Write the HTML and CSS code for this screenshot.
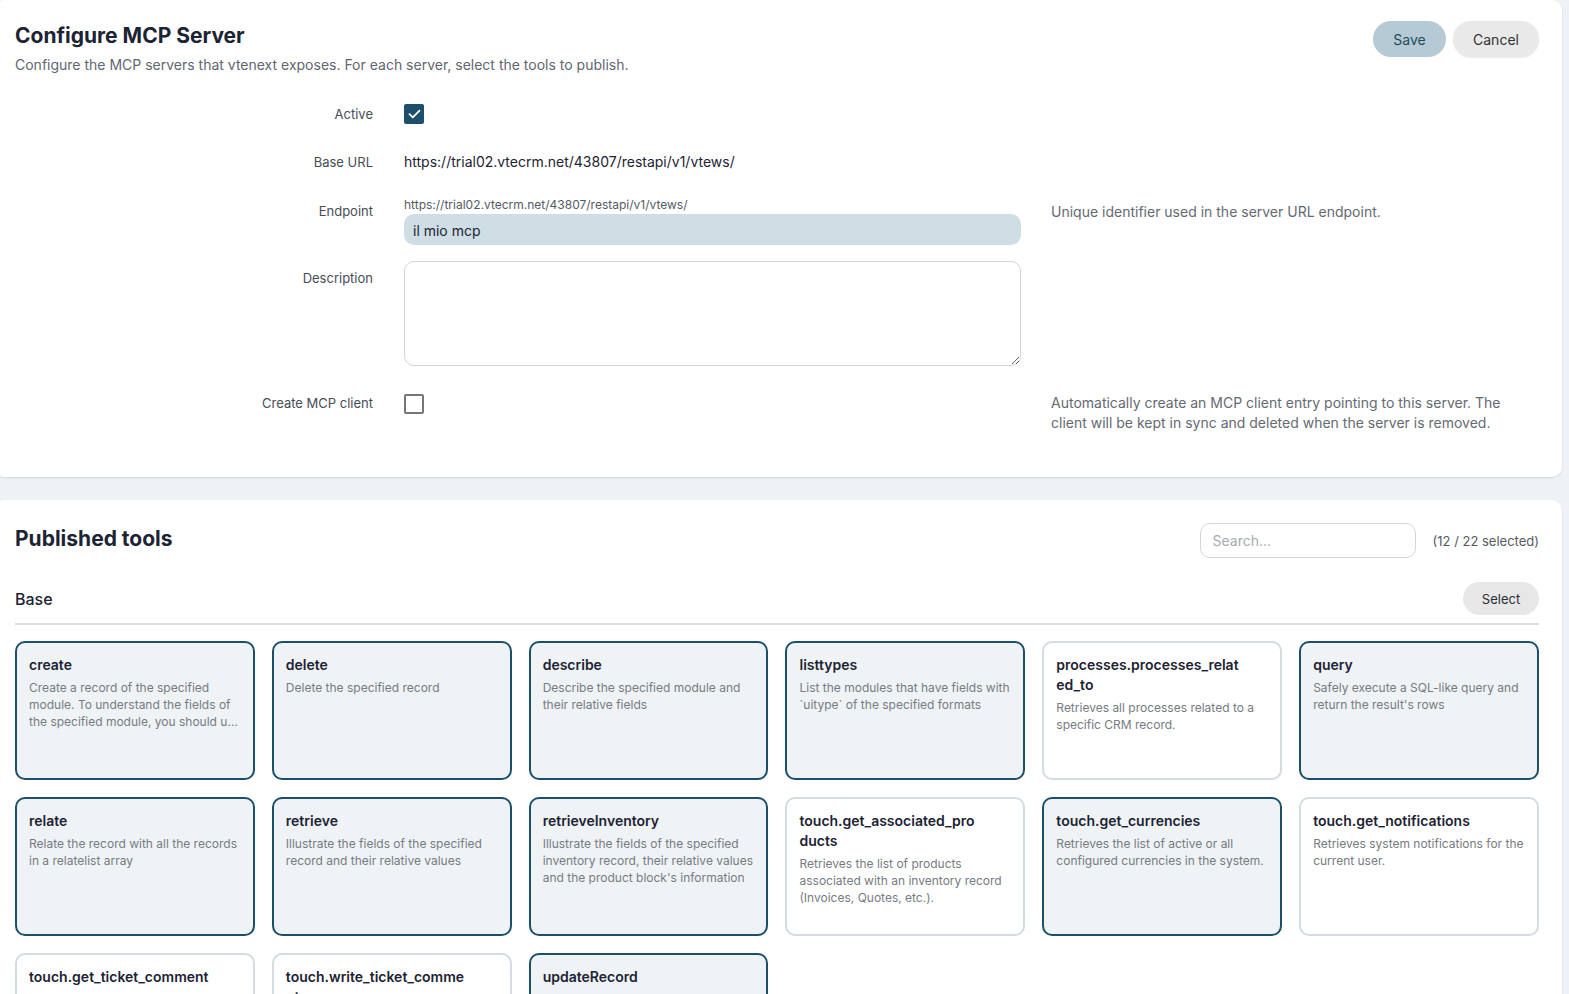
FILE: index.html
```html
<!DOCTYPE html>
<html lang="en">

<head>
    <meta charset="UTF-8">
    <meta name="viewport" content="width=device-width, initial-scale=1.0">
    <title>Configure MCP Server</title>
    <link rel="stylesheet" href="styles.css">
</head>

<body>
    <div class="page">
        <section class="panel settings">
            <div class="panel-head">
                <div>
                    <h1 class="title">Configure MCP Server</h1>
                    <p class="subtitle">Configure the MCP servers that vtenext exposes. For each server, select the tools to publish.</p>
                </div>
                <div class="actions">
                    <button class="btn btn-save">Save</button>
                    <button class="btn btn-cancel">Cancel</button>
                </div>
            </div>

            <div class="form">
                <div class="row row-active">
                    <label class="label">Active</label>
                    <div class="control">
                        <span class="check checked">
                            <svg width="13" height="10" viewBox="0 0 13 10"><path d="M1.5 5.2 4.8 8.3 11.5 1.6" fill="none" stroke="#fff" stroke-width="1.8" stroke-linecap="round" stroke-linejoin="round"/></svg>
                        </span>
                    </div>
                    <div class="help"></div>
                </div>

                <div class="row row-url">
                    <label class="label">Base URL</label>
                    <div class="control url">https://trial02.vtecrm.net/43807/restapi/v1/vtews/</div>
                    <div class="help"></div>
                </div>

                <div class="row row-endpoint">
                    <label class="label">Endpoint</label>
                    <div class="control">
                        <div class="prefix">https://trial02.vtecrm.net/43807/restapi/v1/vtews/</div>
                        <input class="input filled" type="text" value="il mio mcp">
                    </div>
                    <div class="help">Unique identifier used in the server URL endpoint.</div>
                </div>

                <div class="row row-desc">
                    <label class="label">Description</label>
                    <div class="control">
                        <textarea class="textarea"></textarea>
                    </div>
                    <div class="help"></div>
                </div>

                <div class="row row-client">
                    <label class="label">Create MCP client</label>
                    <div class="control">
                        <span class="check"></span>
                    </div>
                    <div class="help">Automatically create an MCP client entry pointing to this server. The client will be kept in sync and deleted when the server is removed.</div>
                </div>
            </div>
        </section>

        <section class="panel tools">
            <div class="tools-head">
                <h2 class="title">Published tools</h2>
                <div class="tools-tools">
                    <input class="search" type="text" placeholder="Search...">
                    <span class="count">(12 / 22 selected)</span>
                </div>
            </div>

            <div class="group-head">
                <h3 class="group-name">Base</h3>
                <button class="btn btn-select">Select</button>
            </div>

            <div class="grid">
                <div class="tool on">
                    <div class="tool-name">create</div>
                    <div class="tool-desc">Create a record of the specified module. To understand the fields of the specified module, you should use the describe tool first</div>
                </div>
                <div class="tool on">
                    <div class="tool-name">delete</div>
                    <div class="tool-desc">Delete the specified record</div>
                </div>
                <div class="tool on">
                    <div class="tool-name">describe</div>
                    <div class="tool-desc">Describe the specified module and their relative fields</div>
                </div>
                <div class="tool on">
                    <div class="tool-name">listtypes</div>
                    <div class="tool-desc">List the modules that have fields with `uitype` of the specified formats</div>
                </div>
                <div class="tool">
                    <div class="tool-name">processes.processes_related_to</div>
                    <div class="tool-desc">Retrieves all processes related to a specific CRM record.</div>
                </div>
                <div class="tool on">
                    <div class="tool-name">query</div>
                    <div class="tool-desc">Safely execute a SQL-like query and return the result's rows</div>
                </div>

                <div class="tool on">
                    <div class="tool-name">relate</div>
                    <div class="tool-desc">Relate the record with all the records in a relatelist array</div>
                </div>
                <div class="tool on">
                    <div class="tool-name">retrieve</div>
                    <div class="tool-desc">Illustrate the fields of the specified record and their relative values</div>
                </div>
                <div class="tool on">
                    <div class="tool-name">retrieveInventory</div>
                    <div class="tool-desc">Illustrate the fields of the specified inventory record, their relative values and the product block's information</div>
                </div>
                <div class="tool">
                    <div class="tool-name">touch.get_associated_products</div>
                    <div class="tool-desc">Retrieves the list of products associated with an inventory record (Invoices, Quotes, etc.).</div>
                </div>
                <div class="tool on">
                    <div class="tool-name">touch.get_currencies</div>
                    <div class="tool-desc">Retrieves the list of active or all configured currencies in the system.</div>
                </div>
                <div class="tool">
                    <div class="tool-name">touch.get_notifications</div>
                    <div class="tool-desc">Retrieves system notifications for the current user.</div>
                </div>

                <div class="tool">
                    <div class="tool-name">touch.get_ticket_comment</div>
                    <div class="tool-desc">Retrieves the comments of a specific ticket.</div>
                </div>
                <div class="tool">
                    <div class="tool-name">touch.write_ticket_comment</div>
                    <div class="tool-desc">Adds a new comment to a specific ticket.</div>
                </div>
                <div class="tool on">
                    <div class="tool-name">updateRecord</div>
                    <div class="tool-desc">Update only the specified fields of a record</div>
                </div>
            </div>
        </section>
    </div>
</body>

</html>
```

FILE: styles.css
```css
* {
    box-sizing: border-box;
}

body {
    margin: 0;
    padding: 0;
    background: #eef2f6;
    font-family: Inter, "Noto Sans", sans-serif;
    color: #1c2333;
}

.page {
    padding-right: 7px;
}

.panel {
    background: #fff;
    border-radius: 3px 10px 10px 3px;
    box-shadow: 0 1px 2px rgba(0, 0, 0, 0.12);
}

.settings {
    padding: 21px 23px 44px 15px;
}

.tools {
    margin-top: 23px;
    padding: 23px 23px 40px 15px;
}

.panel-head {
    display: flex;
    justify-content: space-between;
    align-items: flex-start;
}

.title {
    margin: 0;
    padding-top: 1px;
    font-size: 21px;
    line-height: 28px;
    font-weight: 700;
    color: #1c2333;
}

.tools-head .title {
    padding-top: 2px;
}

.subtitle {
    margin: 5px 0 0;
    font-size: 14px;
    line-height: 20px;
    color: #5f6670;
}

.actions {
    display: flex;
    gap: 7px;
}

.btn {
    border: none;
    border-radius: 20px;
    font-family: inherit;
    cursor: pointer;
}

.btn-save {
    height: 36px;
    width: 73px;
    font-size: 14px;
    background: #b5cad4;
    color: #1f4a5e;
}

.btn-cancel {
    height: 36px;
    width: 86px;
    font-size: 14px;
    background: #e9e9e9;
    color: #333;
    box-shadow: 0 1px 2px rgba(0, 0, 0, 0.08);
}

/* form */
.row {
    display: grid;
    grid-template-columns: 359px 617px 1fr;
    column-gap: 30px;
    align-items: start;
}

.label {
    text-align: right;
    font-size: 13px;
    line-height: 20px;
    color: #474d55;
    padding-right: 1px;
}

.help {
    font-size: 14px;
    line-height: 20px;
    color: #646a72;
}

.row-active {
    margin-top: 29px;
}

.row-url {
    margin-top: 28px;
}

.url {
    font-size: 14px;
    line-height: 20px;
    color: #1c2333;
}

.row-endpoint {
    margin-top: 25px;
}

.row-endpoint .label {
    padding-top: 4px;
}

.row-endpoint .help {
    padding-top: 5px;
}

.prefix {
    font-size: 12px;
    line-height: 16px;
    color: #555b63;
}

.input {
    display: block;
    width: 100%;
    height: 31px;
    margin-top: 1px;
    padding: 1px 9px 0;
    border: none;
    border-radius: 10px;
    font-family: inherit;
    font-size: 14px;
    color: #1c2333;
}

.input.filled {
    background: #cfdee5;
}

.row-desc {
    margin-top: 16px;
}

.row-desc .label {
    padding-top: 7px;
}

.textarea {
    display: block;
    width: 100%;
    height: 105px;
    border: 1px solid #cfd6dd;
    border-radius: 10px;
    font-family: inherit;
}

.row-client {
    margin-top: 27px;
}

.row-client .check {
    margin-top: 1px;
}

.check {
    display: flex;
    align-items: center;
    justify-content: center;
    width: 20px;
    height: 20px;
    border: 2px solid #767676;
    border-radius: 2px;
    background: #fff;
}

.check.checked {
    border: none;
    background: #1c506a;
}

/* tools */
.tools-head {
    display: flex;
    justify-content: space-between;
    align-items: flex-start;
}

.tools-tools {
    display: flex;
    align-items: flex-start;
    gap: 17px;
}

.search {
    width: 216px;
    height: 35px;
    padding: 0 12px;
    border: 1px solid #cfd6dd;
    border-radius: 10px;
    font-family: inherit;
    font-size: 14px;
}

.search::placeholder {
    color: #a6abb1;
}

.count {
    margin-top: 8px;
    font-size: 13px;
    line-height: 20px;
    color: #555b63;
}

.group-head {
    display: flex;
    justify-content: space-between;
    align-items: center;
    margin-top: 24px;
    padding-bottom: 8px;
    border-bottom: 2px solid #d8dfe5;
}

.group-name {
    margin: 0;
    font-size: 16px;
    font-weight: 500;
    color: #1c2333;
}

.btn-select {
    height: 33px;
    width: 76px;
    font-size: 13px;
    background: #e7e7e7;
    color: #2b2f35;
}

.grid {
    display: grid;
    grid-template-columns: repeat(6, 1fr);
    gap: 17px;
    margin-top: 16px;
}

.tool {
    height: 139px;
    padding: 12px 12px;
    border: 2px solid #d3dce3;
    border-radius: 10px;
    background: #fff;
}

.tool.on {
    border-color: #1c506a;
    background: #eff3f6;
}

.tool-name {
    padding-right: 29px;
    font-size: 14px;
    line-height: 20px;
    font-weight: 600;
    color: #1c2333;
    word-break: break-all;
}

.tool-desc {
    margin-top: 4px;
    font-size: 12px;
    line-height: 17px;
    color: #767b82;
    display: -webkit-box;
    -webkit-line-clamp: 3;
    -webkit-box-orient: vertical;
    overflow: hidden;
}
```
